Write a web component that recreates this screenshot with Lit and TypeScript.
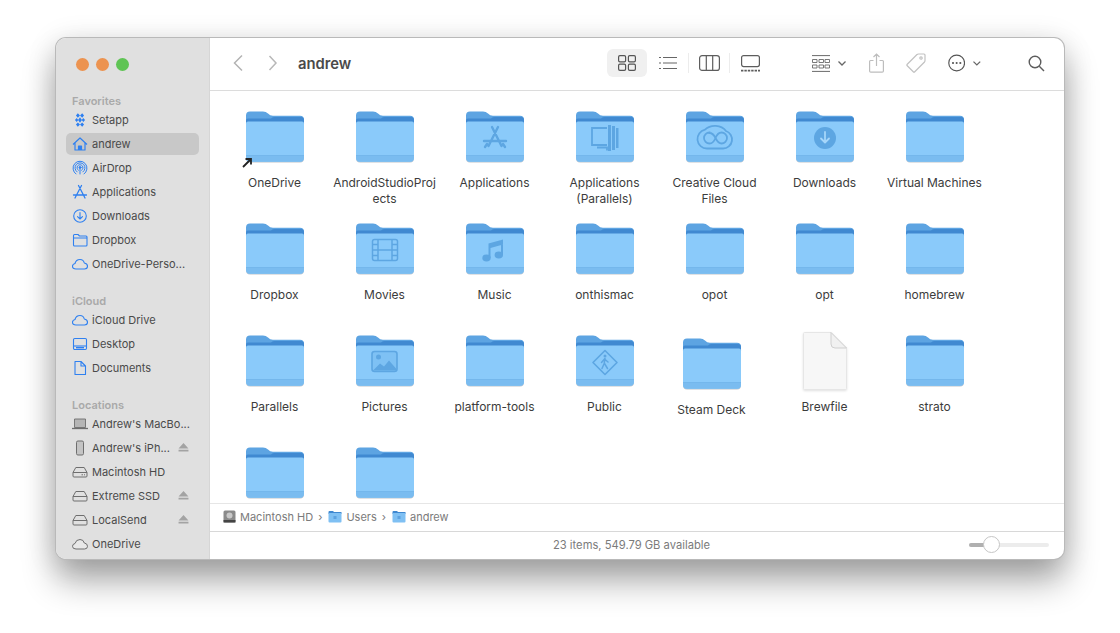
import { LitElement, html, svg, css } from "lit";
import { customElement } from "lit/decorators.js";

const GLYPH = "#5da6e2";

// glyphs drawn over the folder body, in the folder's 60x52 box
const folderGlyphs: Record<string, unknown> = {
  apps: svg`<g fill="none" stroke=${GLYPH} stroke-width="2.400" stroke-linecap="round">
    <path d="M27 16l9.5 19M33 16l-9.500 19M19 30h22M20 36l2-3M40 36l-2-3" /></g>`,
  parallels: svg`<g fill="none" stroke=${GLYPH} stroke-width="1.800">
    <path d="M32 17H17v17h15" /><path d="M22 36.500h10v3" /></g>
    <g fill=${GLYPH}><rect x="33" y="14" width="3" height="26" /><rect x="37" y="15" width="3" height="24" /><rect x="41" y="17" width="2.500" height="20" /></g>`,
  cc: svg`<g fill="none" stroke=${GLYPH} stroke-width="1.800">
    <path d="M22 37.500a9.500 9.500 0 0 1-2-18.800 13 11 0 0 1 21 1.300 9 9 0 0 1-3 17.500z" />
    <path d="M24.500 22c3.500 0 5 3 6 5s3 5.500 6 5.500a5.500 5.500 0 0 0 0-11c-3 0-5 3-6 5.500s-2.500 5.500-6 5.500a5.500 5.500 0 0 1 0-11z" /></g>`,
  download: svg`<circle cx="30" cy="27" r="11" fill=${GLYPH} />
    <path d="M30 21v10M26 27.500l4 4 4-4" fill="none" stroke="#a5d6fa" stroke-width="1.800" stroke-linecap="round" stroke-linejoin="round" />`,
  movies: svg`<g fill="none" stroke=${GLYPH} stroke-width="1.500">
    <rect x="17.500" y="16.500" width="25" height="21" rx="2" />
    <path d="M23 17v20M37 17v20M17.500 27h25M17.500 21.500h5M17.500 32.500h5M37.500 21.500h5M37.500 32.500h5" /></g>`,
  music: svg`<g fill=${GLYPH}>
    <path d="M23.500 20.500L38 16.500v5L25.500 25v10h-2zM36 17h2v15h-2z" />
    <ellipse cx="21.500" cy="35" rx="4.200" ry="3.400" /><ellipse cx="33.800" cy="32" rx="4.200" ry="3.400" /></g>`,
  pictures: svg`<rect x="17" y="16.500" width="25" height="20" rx="2.500" fill=${GLYPH} fill-opacity=".25" stroke=${GLYPH} stroke-width="1.600" />
    <circle cx="23.500" cy="22" r="2.500" fill=${GLYPH} />
    <path d="M18 35.500l7-7 4 3 5-6 7 8v2z" fill=${GLYPH} />`,
  public: svg`<path d="M30 15.500L42 27.500 30 39.500 18 27.500z" fill="none" stroke=${GLYPH} stroke-width="1.600" stroke-linejoin="round" />
    <circle cx="30" cy="21" r="1.500" fill=${GLYPH} />
    <path d="M30 23.500l-.8 5-2.200 5M29.500 28.500l3 5M26.500 27.500l3-3.500 3.500 3" fill="none" stroke=${GLYPH} stroke-width="1.500" stroke-linecap="round" />`,
};

const folder = (glyph?: string) => html`<svg class="folder" viewBox="0 0 60 52" width="60" height="52">
  <path d="M1 47Q1 51.500 5 51.500H55Q59 51.500 59 47V20H1Z" fill="#7f8a96" opacity=".5" />
  <path d="M1 4.500Q1 .5 5 .5H18Q21 .5 23 2.500Q25 4.800 28 4.800H55Q59 4.800 59 9V20H1Z" fill="#5da4e2" />
  <path d="M1 12V9.500Q1 7.500 3 7.500H26Q27 6 29 6H56Q59 6 59 9V12Z" fill="#4089d1" />
  <path d="M1 12.500Q1 10.500 3 10.500H57Q59 10.500 59 12.500V46.500Q59 50.700 55 50.700H5Q1 50.700 1 46.500Z" fill="#8acafa" />
  <path d="M1 44.500H59V46.500Q59 50.700 55 50.700H5Q1 50.700 1 46.500Z" fill="#7abcf0" />
  <path d="M1 44.500H59" stroke="#6bafe6" stroke-width=".6" />
  ${glyph ? folderGlyphs[glyph] : ""}
</svg>`;

const documentIcon = html`<svg class="doc" viewBox="0 0 44 58" width="44" height="58">
  <path d="M.5 1.500Q.5.5 1.500.5H28L43.500 16V56.500Q43.500 57.500 42.500 57.500H1.500Q.5 57.500.5 56.500Z" fill="#f7f7f7" stroke="#e6e6e6" />
  <path d="M28 .5V12Q28 16 32 16H43.500Z" fill="#f1f1f1" stroke="#cfcfcf" />
</svg>`;

const sideIcons: Record<string, unknown> = {
  setapp: html`<svg viewBox="0 0 16 16"><g fill="currentColor" transform="translate(8 8) scale(.78 .95) translate(-8 -8)">
    <path d="M5.200 1L8 3.200 5.200 5.500 2.800 3.200zM10.800 1L13.200 3.200 10.800 5.500 8 3.200zM8 5L10.500 8 8 11 5.500 8zM3.800 5.800L5.800 8 3.800 10.200 1.500 8zM12.200 5.800L14.500 8 12.200 10.200 10.200 8zM5.200 10.500L8 12.800 5.200 15 2.800 12.800zM10.800 10.500L13.200 12.800 10.800 15 8 12.800z" /></g></svg>`,
  home: html`<svg viewBox="0 0 16 16" fill="none" stroke="currentColor" stroke-width="1.200" stroke-linejoin="round">
    <path d="M1 8.500L8 2l7 6.500M3 7v7h10V7" /><path d="M6.500 14V10h3v4" fill="currentColor" /></svg>`,
  airdrop: html`<svg viewBox="0 0 16 16" fill="none" stroke="currentColor" stroke-width="1" stroke-linecap="round">
    <path d="M4 14a7 7 0 1 1 8 0M5.200 12a5 5 0 1 1 5.600 0M6.400 10.300a3 3 0 1 1 3.200 0" /><circle cx="8" cy="7.500" r="1" fill="currentColor" /><path d="M8 9v5" /></svg>`,
  apps: html`<svg viewBox="0 0 16 16" fill="none" stroke="currentColor" stroke-width="1.300" stroke-linecap="round">
    <path d="M6.500 1.500L13 14M9.500 1.500L3 14M1.500 11h13" /></svg>`,
  download: html`<svg viewBox="0 0 16 16" fill="none" stroke="currentColor" stroke-width="1.100" stroke-linecap="round" stroke-linejoin="round">
    <circle cx="8" cy="8" r="6.300" /><path d="M8 4.500v6.500M5.500 8.700L8 11l2.500-2.300" /></svg>`,
  folder: html`<svg viewBox="0 0 16 16" fill="none" stroke="currentColor" stroke-width="1.100" stroke-linejoin="round">
    <path d="M1.500 3.500Q1.500 2.500 2.500 2.500H6L7.500 4H14Q15 4 15 5V13Q15 14 14 14H2.500Q1.500 14 1.500 13ZM1.500 6H15" /></svg>`,
  cloud: html`<svg viewBox="0 0 16 16" fill="none" stroke="currentColor" stroke-width="1.100" stroke-linejoin="round">
    <path d="M4 13Q.5 13 .5 10.300 .5 8 3 7.500 4 3.500 8 3.500 11.500 3.500 12.300 7 15.500 7.500 15.500 10.300 15.500 13 12.500 13Z" /></svg>`,
  clouddark: html`<svg viewBox="0 0 16 16" fill="#e8e8e8" stroke="currentColor" stroke-width="1" stroke-linejoin="round">
    <path d="M4 13Q.5 13 .5 10.300 .5 8 3 7.500 4 3.500 8 3.500 11.500 3.500 12.300 7 15.500 7.500 15.500 10.300 15.500 13 12.500 13Z" /></svg>`,
  desktop: html`<svg viewBox="0 0 16 16" fill="none" stroke="currentColor" stroke-width="1.100">
    <rect x="1.500" y="2.500" width="13" height="11" rx="1.200" /><path d="M1.500 10h13" /><path d="M4 11.700h8" stroke-width="1.400" /></svg>`,
  document: html`<svg viewBox="0 0 16 16" fill="none" stroke="currentColor" stroke-width="1.100" stroke-linejoin="round">
    <path d="M3 1.500H9L13.500 6V14.500H3ZM9 1.500V6H13.500" /></svg>`,
  laptop: html`<svg viewBox="0 0 16 16"><path d="M2.500 3H13.500V11.500H2.500Z" fill="#b5b5b5" stroke="currentColor" stroke-width=".9" /><path d="M0 12.500H16" stroke="currentColor" stroke-width="1.300" /></svg>`,
  phone: html`<svg viewBox="0 0 16 16"><rect x="4.500" y="1" width="7" height="14" rx="1.400" fill="#c4c4c4" stroke="currentColor" stroke-width="1" /></svg>`,
  drive: html`<svg viewBox="0 0 16 16" fill="none" stroke="currentColor" stroke-width="1"  stroke-linejoin="round">
    <path d="M3.800 3.500H12.200L15 8.500V12Q15 13 14 13H2Q1 13 1 12V8.500ZM1 8.500H15" /></svg>`,
  hd: html`<svg viewBox="0 0 16 16" fill="none" stroke="currentColor" stroke-width="1" stroke-linejoin="round">
    <path d="M3.800 3.500H12.200L15 8.500V12Q15 13 14 13H2Q1 13 1 12V8.500ZM1 8.500H15M9.500 10.800h1.500M12 10.800h1" /></svg>`,
};

const eject = html`<svg class="eject" viewBox="0 0 12 10" width="11" height="9">
  <path d="M6 0L11.500 6H.5Z M.5 7.500H11.500V9.500H.5Z" fill="#a3a3a3" /></svg>`;

type Side = { icon: string; label: string; eject?: boolean; active?: boolean; gray?: boolean };

const sections: { title: string; items: Side[] }[] = [
  {
    title: "Favorites",
    items: [
      { icon: "setapp", label: "Setapp" },
      { icon: "home", label: "andrew", active: true },
      { icon: "airdrop", label: "AirDrop" },
      { icon: "apps", label: "Applications" },
      { icon: "download", label: "Downloads" },
      { icon: "folder", label: "Dropbox" },
      { icon: "cloud", label: "OneDrive-Perso..." },
    ],
  },
  {
    title: "iCloud",
    items: [
      { icon: "cloud", label: "iCloud Drive" },
      { icon: "desktop", label: "Desktop" },
      { icon: "document", label: "Documents" },
    ],
  },
  {
    title: "Locations",
    items: [
      { icon: "laptop", label: "Andrew's MacBo...", gray: true },
      { icon: "phone", label: "Andrew's iPh...", eject: true, gray: true },
      { icon: "hd", label: "Macintosh HD", gray: true },
      { icon: "drive", label: "Extreme SSD", eject: true, gray: true },
      { icon: "drive", label: "LocalSend", eject: true, gray: true },
      { icon: "clouddark", label: "OneDrive", gray: true },
    ],
  },
];

type Entry = { name?: string; glyph?: string; alias?: boolean; doc?: boolean; moved?: boolean };

const entries: Entry[] = [
  { name: "OneDrive", alias: true },
  { name: "AndroidStudioProj ects" },
  { name: "Applications", glyph: "apps" },
  { name: "Applications (Parallels)", glyph: "parallels" },
  { name: "Creative Cloud Files", glyph: "cc" },
  { name: "Downloads", glyph: "download" },
  { name: "Virtual Machines" },
  { name: "Dropbox" },
  { name: "Movies", glyph: "movies" },
  { name: "Music", glyph: "music" },
  { name: "onthismac" },
  { name: "opot" },
  { name: "opt" },
  { name: "homebrew" },
  { name: "Parallels" },
  { name: "Pictures", glyph: "pictures" },
  { name: "platform-tools" },
  { name: "Public", glyph: "public" },
  { name: "Steam Deck", moved: true },
  { name: "Brewfile", doc: true },
  { name: "strato" },
  {},
  {},
];

const miniFolder = html`<svg viewBox="0 0 14 13" width="14" height="13">
  <path d="M.5 2Q.5 1 1.500 1H5L6 2H13.500V4H.5Z" fill="#3f88d0" />
  <rect x=".5" y="3" width="13" height="9.500" rx="1" fill="#7fc0f3" />
  <rect x="5.500" y="6" width="3" height="3" fill="#5da2e0" />
</svg>`;

@customElement("app-root")
export class AppRoot extends LitElement {
  static styles = css`
    :host {
      display: block;
      width: 1120px;
      height: 633px;
      box-sizing: border-box;
      padding: 38px 56px 74px;
      background: #fff;
      overflow: hidden;
      font-family: Inter, "Liberation Sans", sans-serif;
    }
    .window {
      display: flex;
      height: 521px;
      border-radius: 10px;
      overflow: hidden;
      background: #fff;
      box-shadow: 0 0 0 1px #b9b9b9, 0 22px 34px rgba(0, 0, 0, 0.33), 0 4px 30px rgba(0, 0, 0, 0.14);
    }
    .sidebar {
      width: 154px;
      flex: none;
      box-sizing: border-box;
      background: #e0e0e0;
      border-right: 1px solid #d6d6d6;
      overflow: hidden;
    }
    .lights {
      display: flex;
      gap: 7px;
      align-items: center;
      height: 52px;
      padding: 0 0 0 20px;
    }
    .lights i {
      width: 13px;
      height: 13px;
      border-radius: 50%;
      background: #ec9350;
    }
    .lights i.green {
      background: #5fc454;
    }
    .section {
      margin-top: 4px;
      margin-bottom: 18px;
    }
    .section + .section {
      margin-top: 0;
    }
    .section h2 {
      margin: 0;
      padding-left: 16px;
      height: 14px;
      font-size: 11px;
      line-height: 14px;
      font-weight: 600;
      color: #a9a9a9;
    }
    .row {
      display: flex;
      align-items: center;
      height: 24px;
      padding-left: 16px;
      font-size: 11px;
      white-space: nowrap;
      position: relative;
      color: #4a4a4a;
    }
    .row.active::before {
      content: "";
      position: absolute;
      left: 10px;
      width: 133px;
      top: 1px;
      bottom: 1px;
      border-radius: 5px;
      background: #c8c8c8;
    }
    .ic {
      width: 16px;
      height: 16px;
      flex: none;
      margin-right: 4px;
      color: #2f80f0;
      position: relative;
    }
    .ic svg {
      display: block;
      width: 16px;
      height: 16px;
    }
    .row.gray .ic {
      color: #6e6e6e;
    }
    .row span {
      position: relative;
    }
    .eject {
      position: absolute;
      left: 122px;
      top: 7px;
    }
    .main {
      flex: 1;
      min-width: 0;
      display: flex;
      flex-direction: column;
    }
    .toolbar {
      height: 53px;
      flex: none;
      box-sizing: border-box;
      display: flex;
      align-items: center;
      padding: 0 16px 2px 18px;
      border-bottom: 1px solid #dcdcdc;
    }
    .slot {
      height: 28px;
      display: flex;
      align-items: center;
      justify-content: center;
      flex: none;
      gap: 8px;
      box-sizing: border-box;
    }
    .nav {
      width: 20px;
    }
    .nav + .nav {
      margin-left: 15px;
    }
    .title {
      margin-left: 15px;
      padding-top: 2px;
      font-size: 14.8px;
      font-weight: 600;
      color: #4a4a4a;
      flex: 1;
    }
    .view.pill {
      width: 40px;
      background: #f0f0f0;
      border-radius: 6px;
    }
    .w41 {
      width: 41px;
    }
    .w42 {
      width: 42px;
    }
    .sep {
      position: relative;
    }
    .sep::after {
      content: "";
      position: absolute;
      right: 0;
      top: 4px;
      height: 20px;
      border-right: 1px solid #ececec;
    }
    .tool-group {
      margin-left: 41px;
      width: 34px;
    }
    .tool-share {
      width: 41px;
      margin-left: 10px;
    }
    .tool-tag {
      width: 37px;
    }
    .tool-more {
      width: 33px;
      margin-left: 14px;
    }
    .tool-search {
      width: 24px;
      margin-left: 43px;
    }
    .files {
      flex: 1;
      min-height: 0;
      overflow: hidden;
      padding: 20px 0 0 9.500px;
      display: grid;
      grid-template-columns: repeat(7, 110px);
      grid-auto-rows: 112px;
    }
    .cell {
      display: flex;
      flex-direction: column;
      align-items: center;
      position: relative;
    }
    .cell.moved {
      transform: translate(-3px, 3px);
    }
    .icon {
      width: 60px;
      height: 52px;
      display: flex;
      align-items: center;
      justify-content: center;
      position: relative;
    }
    .icon svg {
      flex: none;
    }
    .doc {
      filter: drop-shadow(0 1px 1px rgba(0, 0, 0, 0.12));
    }
    .alias {
      position: absolute;
      left: -3px;
      bottom: -5px;
    }
    .name {
      margin-top: 12px;
      width: 108px;
      text-align: center;
      font-size: 12px;
      line-height: 16px;
      color: #3c3c3c;
    }
    .path {
      height: 29px;
      flex: none;
      box-sizing: border-box;
      display: flex;
      align-items: center;
      padding: 0 0 2px 13px;
      border-top: 1px solid #e6e6e6;
      border-bottom: 1px solid #d8d8d8;
      font-size: 11px;
      color: #7b7b7b;
    }
    .path svg {
      flex: none;
      margin-right: 4px;
    }
    .path .chev {
      margin: 0 6px 0 5px;
      font-size: 11px;
    }
    .status {
      height: 27px;
      flex: none;
      display: flex;
      align-items: center;
      padding: 0 15px 2px 84px;
      box-sizing: border-box;
      font-size: 11.2px;
      color: #7b7b7b;
    }
    .status .count {
      flex: 1;
      text-align: center;
    }
    .slider {
      width: 80px;
      height: 4px;
      border-radius: 2px;
      background: #ececec;
      position: relative;
    }
    .slider::before {
      content: "";
      position: absolute;
      left: 0;
      top: 0;
      bottom: 0;
      width: 16px;
      border-radius: 2px 0 0 2px;
      background: #b0b0b0;
    }
    .slider::after {
      content: "";
      position: absolute;
      left: 14px;
      top: -6.500px;
      width: 15px;
      height: 15px;
      border-radius: 50%;
      background: #fff;
      border: 1px solid #c6c6c6;
    }
  `;

  private side() {
    return sections.map(
      (s) => html`<div class="section">
        <h2>${s.title}</h2>
        ${s.items.map(
          (it) => html`<div class="row ${it.active ? "active" : ""} ${it.gray ? "gray" : ""}">
            <div class="ic">${sideIcons[it.icon]}</div>
            <span>${it.label}</span>
            ${it.eject ? eject : ""}
          </div>`
        )}
      </div>`
    );
  }

  render() {
    return html`<div class="window">
      <aside class="sidebar">
        <div class="lights"><i></i><i></i><i class="green"></i></div>
        ${this.side()}
      </aside>
      <div class="main">
        <div class="toolbar">
          <div class="slot nav">
            <svg width="12" height="18" viewBox="0 0 12 18" fill="none" stroke="#b3b3b3" stroke-width="1.500"><path d="M10 1.500L2.500 9l7.500 7.500" /></svg>
          </div>
          <div class="slot nav">
            <svg width="10" height="18" viewBox="0 0 10 18" fill="none" stroke="#b8b8b8" stroke-width="1.500"><path d="M1.500 2l6.500 7-6.500 7" /></svg>
          </div>
          <div class="title">andrew</div>
          <div class="slot view pill">
            <svg width="18" height="16" viewBox="0 0 18 16" fill="none" stroke="#555" stroke-width="1.200">
              <rect x=".6" y=".6" width="7" height="6.300" rx="1.300" /><rect x="10.400" y=".6" width="7" height="6.300" rx="1.300" /><rect x=".6" y="9.100" width="7" height="6.300" rx="1.300" /><rect x="10.400" y="9.100" width="7" height="6.300" rx="1.300" />
            </svg>
          </div>
          <div class="slot w42 sep">
            <svg width="18" height="14" viewBox="0 0 18 14" fill="none" stroke="#666" stroke-width="1.200"><path d="M4 1.500h14M4 7h14M4 12.500h14M0 1.500h2M0 7h2M0 12.500h2" /></svg>
          </div>
          <div class="slot w41 sep">
            <svg width="21" height="16" viewBox="0 0 21 16" fill="none" stroke="#5d5d5d" stroke-width="1.200"><rect x=".6" y=".6" width="19.800" height="14.800" rx="2.500" /><path d="M7.300.6v14.800M13.700.6v14.800" /></svg>
          </div>
          <div class="slot w41">
            <svg width="19" height="17" viewBox="0 0 19 17" fill="none" stroke="#5d5d5d" stroke-width="1.200"><rect x=".6" y=".6" width="17.800" height="11" rx="2" /><path d="M0 15.700h19" stroke-width="1.800" stroke-dasharray="2.400 1" /></svg>
          </div>
          <div class="slot tool-group">
            <svg width="18" height="17" viewBox="0 0 18 17" fill="none" stroke="#6a6a6a"><path d="M0 .6h18M0 16.400h18" /><path d="M.5 4.500h4.500v3H.5zM7 4.500h4.500v3H7zM13 4.500h4.500v3H13zM.5 10h4.500v3H.5zM7 10h4.500v3H7zM13 10h4.500v3H13z" stroke-width=".9" /></svg>
            <svg width="8" height="5" viewBox="0 0 8 5" fill="none" stroke="#666" stroke-width="1.300"><path d="M.5.5L4 4 7.500.5" /></svg>
          </div>
          <div class="slot tool-share">
            <svg width="15" height="20" viewBox="0 0 15 20" fill="none" stroke="#bdbdbd" stroke-width="1.200"><path d="M4.500 7.500H1.500Q.6 7.500.6 8.500V18Q.6 19.200 1.800 19.200H13.200Q14.400 19.200 14.400 18V8.500Q14.400 7.500 13.500 7.500H10.500M7.500 13V1M4.500 4l3-3 3 3" /></svg>
          </div>
          <div class="slot tool-tag">
            <svg width="20" height="20" viewBox="0 0 20 20" fill="none" stroke="#c2c2c2" stroke-width="1.200"><path d="M1 11.500L11 1.500Q11.500 1 12.500 1H18Q19 1 19 2V7.500Q19 8.500 18.500 9L8.500 19Q8 19.500 7.500 19L1 12.500Q.6 12 1 11.500Z" /><circle cx="15" cy="5" r="1.200" /></svg>
          </div>
          <div class="slot tool-more">
            <svg width="18" height="18" viewBox="0 0 18 18" fill="none" stroke="#555" stroke-width="1.200"><circle cx="9" cy="9" r="8.200" /><g fill="#555" stroke="none"><circle cx="5.200" cy="9" r="1.100" /><circle cx="9" cy="9" r="1.100" /><circle cx="12.800" cy="9" r="1.100" /></g></svg>
            <svg width="8" height="5" viewBox="0 0 8 5" fill="none" stroke="#666" stroke-width="1.300"><path d="M.5.5L4 4 7.500.5" /></svg>
          </div>
          <div class="slot tool-search">
            <svg width="17" height="17" viewBox="0 0 17 17" fill="none" stroke="#5d5d5d" stroke-width="1.400"><circle cx="7" cy="7" r="5.800" /><path d="M11.300 11.300L16 16" /></svg>
          </div>
        </div>
        <div class="files">
          ${entries.map(
            (e) => html`<div class="cell ${e.moved ? "moved" : ""}">
              <div class="icon">
                ${e.doc ? documentIcon : folder(e.glyph)}
                ${e.alias
                  ? html`<svg class="alias" width="11" height="11" viewBox="0 0 11 11"><path d="M1 10L8 3M3.500 2H9V7.500" fill="none" stroke="#222" stroke-width="1.800" /></svg>`
                  : ""}
              </div>
              ${e.name ? html`<div class="name">${e.name}</div>` : ""}
            </div>`
          )}
        </div>
        <div class="path">
          <svg viewBox="0 0 13 13" width="13" height="13"><rect x=".5" y=".5" width="12" height="12" rx="1.500" fill="#8a8a8a" /><circle cx="6.500" cy="5.500" r="3" fill="#c8c8c8" /><rect x=".5" y="10" width="12" height="2.500" fill="#444" /></svg>
          <span>Macintosh HD</span><span class="chev">›</span>
          ${miniFolder}<span>Users</span><span class="chev">›</span>
          ${miniFolder}<span>andrew</span>
        </div>
        <div class="status">
          <div class="count">23 items, 549.79 GB available</div>
          <div class="slider"></div>
        </div>
      </div>
    </div>`;
  }
}
